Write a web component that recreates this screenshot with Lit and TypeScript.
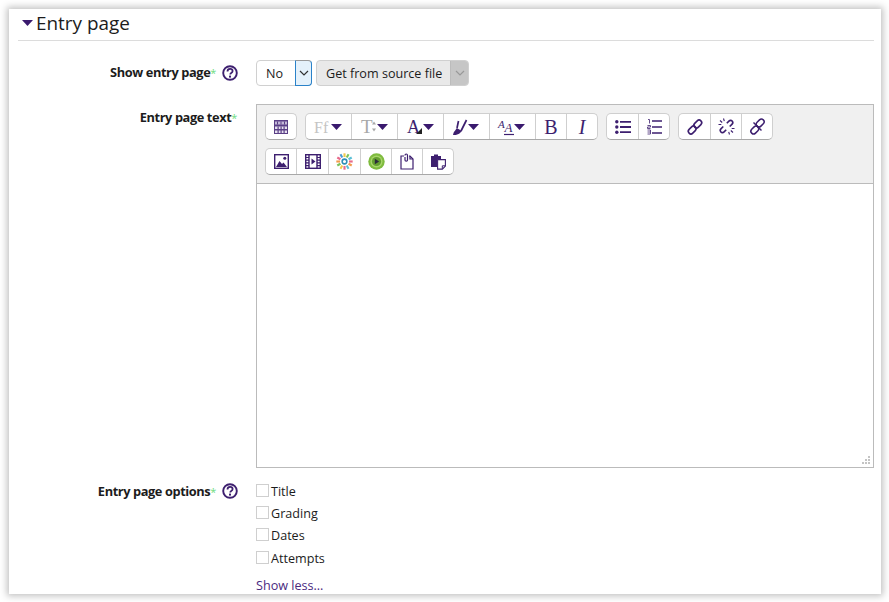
import {LitElement, html, css, svg} from 'lit';
import {customElement} from 'lit/decorators.js';

const caret = svg`<path d="M0 0h11l-5.500 6z" fill="#3a1a6e"/>`;

const help = html`<svg class="help" width="16" height="16" viewBox="0 0 16 16">
  <circle cx="8" cy="8" r="6.800" fill="none" stroke="#3d1f6f" stroke-width="1.900"/>
  <path d="M5.500 6.400c0-1.600 1.100-2.500 2.600-2.500s2.500.9 2.500 2.100c0 1.100-.7 1.600-1.400 2.100-.6.400-.9.700-.9 1.400" fill="none" stroke="#3d1f6f" stroke-width="1.800"/>
  <rect x="7" y="10.600" width="2" height="2" fill="#3d1f6f"/>
</svg>`;

const P = '#3d1f6f';

// toolbar icons, each sized to its own glyph
const icons = {
  kitchen: svg`<svg width="16" height="16" viewBox="0 0 16 16">
    <rect x="1" y="1" width="14" height="14" fill="#5a3f86"/>
    <path d="M2 2.500h12v3H2z" fill="#c4b9d8"/>
    <path d="M2 7.500h12v2.500H2zM2 11.500h12V14H2z" fill="#e6e1ef"/>
    <path d="M4 2.500h1v3H4zM7.500 2.500h1v3h-1zM11 2.500h1v3h-1zM4.500 7.500h1.200V14H4.500zM7.500 7.500h1.200V14H7.500zM10.500 7.500h1.200V14h-1.200z" fill="#5a3f86"/>
  </svg>`,
  font: svg`<svg width="28" height="16" viewBox="0 0 28 16">
    <text x="-1" y="14" class="t-serif" font-size="16" fill="#c4c4c4">Ff</text>
    <g transform="translate(16 5)">${caret}</g>
  </svg>`,
  size: svg`<svg width="28" height="20" viewBox="0 0 28 20">
    <text x="0" y="16" class="t-serif" font-size="19" fill="#a8a8a8">T</text>
    <path d="M11 7.500l2-3 2 3zM11 11.500l2 3 2-3z" fill="#a8a8a8"/>
    <g transform="translate(16 7)">${caret}</g>
  </svg>`,
  color: svg`<svg width="28" height="20" viewBox="0 0 28 20">
    <text x="0" y="16" class="t-serif" font-size="18" fill="${P}">A</text>
    <path d="M15 11v6H9z" fill="#222"/>
    <g transform="translate(16 7)">${caret}</g>
  </svg>`,
  brush: svg`<svg width="30" height="20" viewBox="0 0 30 20">
    <path d="M1 18c.5-2.200 1-3.300 2-4.200L4.800 11l5 3-2 2.300C6 17.800 3.500 18.200 1 18z" fill="${P}"/>
    <path d="M5 11L6.500 4M9 14l5.500-11" fill="none" stroke="${P}" stroke-width="1.700"/>
    <g transform="translate(16 7)">${caret}</g>
  </svg>`,
  style: svg`<svg width="30" height="20" viewBox="0 0 30 20">
    <text x="0" y="11" class="t-serif-i" font-size="11" fill="${P}">A</text>
    <text x="6.500" y="15" class="t-serif-i" font-size="13" fill="${P}">A</text>
    <path d="M6 17.500h10" stroke="${P}" stroke-width="1.200"/>
    <g transform="translate(16 7)">${caret}</g>
  </svg>`,
  bold: svg`<svg width="18" height="22" viewBox="0 0 18 22">
    <text x="9" y="18" text-anchor="middle" class="t-serif" font-size="20" fill="${P}">B</text>
  </svg>`,
  italic: svg`<svg width="14" height="22" viewBox="0 0 14 22">
    <text x="7" y="18" text-anchor="middle" class="t-serif-i" font-size="20" fill="${P}">I</text>
  </svg>`,
  ul: svg`<svg width="16" height="14" viewBox="0 0 16 14">
    <path d="M5 1.800h11M5 7h11M5 12.200h11" stroke="${P}" stroke-width="1.800"/>
    <circle cx="1.800" cy="1.800" r="1.700" fill="${P}"/><circle cx="1.800" cy="7" r="1.700" fill="${P}"/><circle cx="1.800" cy="12.200" r="1.700" fill="${P}"/>
  </svg>`,
  ol: svg`<svg width="15" height="16" viewBox="0 0 15 16">
    <path d="M5 2h10M5 8h10M5 14h10" stroke="${P}" stroke-width="1.600"/>
    <path d="M1 .5h1.500v4M.5 6.500h3v1.500h-3v1.500h3M.5 11h3v4h-3M.5 13h3" fill="none" stroke="${P}" stroke-width=".8"/>
  </svg>`,
  link: svg`<svg width="16" height="16" viewBox="0 0 16 16" fill="none" stroke="${P}" stroke-width="1.600">
    <rect x="8.200" y=".6" width="5.200" height="8.800" rx="2.600" transform="rotate(45 10.800 5)"/>
    <rect x="2.600" y="6.600" width="5.200" height="8.800" rx="2.600" transform="rotate(45 5.200 11)"/>
  </svg>`,
  unlink: svg`<svg width="17" height="17" viewBox="0 0 17 17" fill="none" stroke="${P}" stroke-width="1.600">
    <path d="M8.800 5.200l2.100-2.100c1-1 2.400-1 3.200-.1s.9 2.200 0 3.100l-2.400 2.400"/>
    <path d="M8.200 11.800l-2.100 2.100c-1 1-2.400 1-3.200.1s-.9-2.200 0-3.100l2.400-2.400"/>
    <path d="M5.500 .5l.8 2.700M2 2.500l2.200 2M.5 6.500h2.800M11.500 16.500l-.8-2.700M15 14.500l-2.200-2M16.500 10.500h-2.800" stroke-width="1.100"/>
  </svg>`,
  anchor: svg`<svg width="17" height="17" viewBox="0 0 17 17" fill="none" stroke="${P}" stroke-width="1.500">
    <rect x="8.500" y=".6" width="5.400" height="8.800" rx="2.700" transform="rotate(45 11.200 5)"/>
    <rect x="3.100" y="7.600" width="5.400" height="8.800" rx="2.700" transform="rotate(45 5.800 12)"/>
    <path d="M4.500 4.500l8 8" stroke-width="1.500"/>
  </svg>`,
  image: svg`<svg width="15" height="15" viewBox="0 0 15 15">
    <rect x=".7" y=".7" width="13.600" height="13.600" fill="#fff" stroke="${P}" stroke-width="1.400"/>
    <path d="M2 13l3.500-6 2.500 3 1.500-1.500L13 13z" fill="${P}"/>
    <circle cx="10.800" cy="4.300" r="1.500" fill="${P}"/>
  </svg>`,
  video: svg`<svg width="16" height="15" viewBox="0 0 16 15">
    <rect x=".7" y=".7" width="14.600" height="13.600" fill="#fff" stroke="${P}" stroke-width="1.400"/>
    <path d="M4 0v15M12 0v15" stroke="${P}" stroke-width="1.400"/>
    <path d="M1 3.500h3M1 6.200h3M1 8.900h3M1 11.600h3M12 3.500h3M12 6.200h3M12 8.900h3M12 11.600h3" stroke="${P}" stroke-width="1.200"/>
    <path d="M6.500 4.500l4 3-4 3z" fill="${P}"/>
  </svg>`,
  burst: svg`<svg width="17" height="17" viewBox="0 0 16 16" stroke-width="2">
    <path d="M8 .3v3.500" stroke="#f2c94c"/><path d="M11.800 1.200l-1.700 3" stroke="#7ac25c"/>
    <path d="M14.800 4.200l-3 1.700" stroke="#5bbfd6"/><path d="M15.700 8h-3.500" stroke="#e86a8a"/>
    <path d="M14.800 11.800l-3-1.700" stroke="#f29a4c"/><path d="M11.800 14.800l-1.700-3" stroke="#5bbfd6"/>
    <path d="M8 15.700v-3.500" stroke="#e86a8a"/><path d="M4.200 14.800l1.700-3" stroke="#f2c94c"/>
    <path d="M1.200 11.800l3-1.700" stroke="#7ac25c"/><path d="M.3 8h3.500" stroke="#f29a4c"/>
    <path d="M1.200 4.200l3 1.700" stroke="#e86a8a"/><path d="M4.200 1.200l1.700 3" stroke="#4c9ad6"/>
    <circle cx="8" cy="8" r="2.200" fill="#fff" stroke="#2e8fb8" stroke-width="1.500"/>
  </svg>`,
  play: svg`<svg width="17" height="17" viewBox="0 0 17 17">
    <circle cx="8.500" cy="8.500" r="8.200" fill="#7fbb3e"/>
    <circle cx="8.500" cy="8.500" r="6" fill="#a8d66a"/>
    <circle cx="8.500" cy="8.500" r="4.600" fill="#659f30"/>
    <path d="M6.800 5.800l4.400 2.700-4.400 2.700z" fill="#2b2b3a"/>
  </svg>`,
  paste: svg`<svg width="14" height="17" viewBox="0 0 14 17" fill="none" stroke="${P}" stroke-width="1.200">
    <path d="M4 3H1v13h12V6l-3-3H9"/>
    <path d="M5 2.500C5 1.500 5.500 1 6.200 1S7.500 1.500 7.500 2.500V7c0 .8-.5 1.200-1.200 1.200S5 7.800 5 7V4"/>
    <path d="M10 3v3h3"/>
  </svg>`,
  pasteWord: svg`<svg width="16" height="17" viewBox="0 0 16 17">
    <path d="M1 3h3V1.500h4V3h3v3H7v8H1z" fill="${P}"/>
    <path d="M7.600 6.600h7.800v6.500l-3 3H7.600z" fill="#fff" stroke="${P}" stroke-width="1.100"/>
    <path d="M12.300 15.800v-3h3" fill="none" stroke="${P}" stroke-width="1"/>
  </svg>`,
};

type IconName = keyof typeof icons;

const rows: {name: IconName; w: number}[][][] = [
  [
    [{name: 'kitchen', w: 30}],
    [
      {name: 'font', w: 45},
      {name: 'size', w: 46},
      {name: 'color', w: 46},
      {name: 'brush', w: 46},
      {name: 'style', w: 46},
      {name: 'bold', w: 31},
      {name: 'italic', w: 31},
    ],
    [{name: 'ul', w: 31}, {name: 'ol', w: 31}],
    [{name: 'link', w: 31}, {name: 'unlink', w: 31}, {name: 'anchor', w: 31}],
  ],
  [
    [
      {name: 'image', w: 30},
      {name: 'video', w: 32},
      {name: 'burst', w: 32},
      {name: 'play', w: 31},
      {name: 'paste', w: 31},
      {name: 'pasteWord', w: 31},
    ],
  ],
];

const chevron = (color: string) => html`<svg width="10" height="6" viewBox="0 0 10 6">
  <path d="M1 1l4 4 4-4" fill="none" stroke="${color}" stroke-width="1.200"/>
</svg>`;

@customElement('app-root')
class AppRoot extends LitElement {
  static override styles = css`
    :host {
      display: block;
      height: 602px;
      padding: 9px 8px 8px 9px;
      box-sizing: border-box;
      background: #fff;
      font-family: 'Open Sans', sans-serif;
      font-size: 12.600px;
      color: #1c1c1c;
    }

    .card {
      height: 585px;
      box-sizing: border-box;
      background: #fff;
      box-shadow: 0 0 7px 2px #00000040;
      padding: 0 7px 0 9px;
      overflow: hidden;
    }

    .legend {
      display: flex;
      align-items: center;
      gap: 3px;
      height: 32px;
      box-sizing: border-box;
      padding: 0 0 3px 4px;
      border-bottom: 1px solid #dcdcdc;
      font-size: 18.900px;
      line-height: 28px;
    }

    .row {
      display: grid;
      grid-template-columns: 238px 1fr;
    }

    .row--select {
      padding-top: 19px;
    }

    .row--editor {
      padding-top: 18px;
    }

    .row--options {
      padding-top: 14px;
    }

    .label {
      display: flex;
      justify-content: flex-end;
      align-items: flex-start;
      font-weight: 700;
      font-size: 12.800px;
      letter-spacing: -0.400px;
      line-height: 25px;
    }

    .row--editor .label {
      line-height: 27px;
      padding-right: 19px;
    }

    .row--options .label {
      line-height: 19px;
    }

    .star {
      color: #6fdc7e;
      font-weight: 400;
      font-size: 11px;
    }

    .help {
      margin: 5px 18px 0 6px;
      flex: none;
    }

    .row--options .help {
      margin-top: 1px;
    }

    .selects {
      display: flex;
      gap: 4px;
    }

    .select {
      display: flex;
      height: 26px;
      box-sizing: border-box;
      border: 1px solid #d0d0d0;
      border-radius: 4px;
      line-height: 25px;
      overflow: hidden;
    }

    .select__value {
      padding-left: 9px;
    }

    .select__arrow {
      display: flex;
      align-items: center;
      justify-content: center;
      width: 17px;
    }

    .select--no {
      width: 56px;
      background: #fff;
      overflow: visible;
    }

    .select--no .select__value {
      width: 38px;
      box-sizing: border-box;
    }

    .select--no .select__arrow {
      background: #e4f1fb;
      border: 1px solid #2a82c9;
      border-top-color: #999;
      margin: -1px -1px -1px 0;
      box-sizing: border-box;
      border-radius: 0 4px 4px 0;
    }

    .select--source {
      width: 153px;
      background: #e9e9e9;
      justify-content: space-between;
    }

    .select--source .select__arrow {
      background: #c6c6c6;
      border-left: 1px solid #bcbcbc;
    }

    .editor {
      width: 618px;
      height: 364px;
      box-sizing: border-box;
      border: 1px solid #bbb;
      display: flex;
      flex-direction: column;
      position: relative;
    }

    .toolbar {
      height: 79px;
      box-sizing: border-box;
      background: #f0f0f0;
      border-bottom: 1px solid #bbb;
      padding: 8px 8px 0;
      display: flex;
      flex-direction: column;
      gap: 8px;
    }

    .toolbar__row {
      display: flex;
      gap: 8px;
    }

    .group {
      display: flex;
      height: 27px;
      box-sizing: border-box;
      background: #fff;
      border: 1px solid #cfcfcf;
      border-bottom-color: #a8a8a8;
      border-radius: 5px;
    }

    .btn {
      display: flex;
      align-items: center;
      justify-content: center;
      box-sizing: border-box;
      border-left: 1px solid #cfcfcf;
    }

    .btn:first-child {
      border-left: 0;
    }

    .btn svg {
      overflow: visible;
    }

    .t-serif {
      font-family: 'Liberation Serif', serif;
    }

    .t-serif-i {
      font-family: 'Liberation Serif', serif;
      font-style: italic;
    }

    .content {
      flex: 1;
      background: #fff;
    }

    .grip {
      position: absolute;
      right: 3px;
      bottom: 3px;
    }

    .checks {
      display: flex;
      flex-direction: column;
      gap: 3px;
    }

    .check {
      display: flex;
      align-items: center;
      gap: 2px;
      height: 19px;
      line-height: 19px;
    }

    .check:last-child {
      margin-top: 1px;
    }

    .box {
      width: 11px;
      height: 11px;
      border: 1px solid #cfcfcf;
      margin-top: -2px;
    }

    .more {
      color: #4a2a80;
      margin-top: 9px;
      line-height: 18px;
    }
  `;

  private renderToolbar() {
    return rows.map(
      (row) => html`<div class="toolbar__row">
        ${row.map(
          (group) => html`<div class="group">
            ${group.map(
              (b) => html`<div class="btn" style="width:${b.w}px">${icons[b.name]}</div>`
            )}
          </div>`
        )}
      </div>`
    );
  }

  override render() {
    return html`
      <div class="card">
        <div class="legend">
          <svg width="11" height="6" viewBox="0 0 11 6">${caret}</svg>
          <span>Entry page</span>
        </div>

        <div class="row row--select">
          <div class="label">Show entry page<span class="star">*</span>${help}</div>
          <div class="selects">
            <div class="select select--no">
              <div class="select__value">No</div>
              <div class="select__arrow">${chevron('#333')}</div>
            </div>
            <div class="select select--source">
              <div class="select__value">Get from source file</div>
              <div class="select__arrow">${chevron('#999')}</div>
            </div>
          </div>
        </div>

        <div class="row row--editor">
          <div class="label">Entry page text<span class="star">*</span></div>
          <div class="editor">
            <div class="toolbar">${this.renderToolbar()}</div>
            <div class="content"></div>
            <svg class="grip" width="8" height="8" viewBox="0 0 8 8" fill="#c4c4c4">
              <path d="M6 0h2v2H6zM3 3h2v2H3zM6 3h2v2H6zM0 6h2v2H0zM3 6h2v2H3zM6 6h2v2H6z"/>
            </svg>
          </div>
        </div>

        <div class="row row--options">
          <div class="label">Entry page options<span class="star">*</span>${help}</div>
          <div>
            <div class="checks">
              ${['Title', 'Grading', 'Dates', 'Attempts'].map(
                (t) => html`<div class="check"><span class="box"></span>${t}</div>`
              )}
            </div>
            <div class="more">Show less...</div>
          </div>
        </div>
      </div>
    `;
  }
}

declare global {
  interface HTMLElementTagNameMap {
    'app-root': AppRoot;
  }
}
